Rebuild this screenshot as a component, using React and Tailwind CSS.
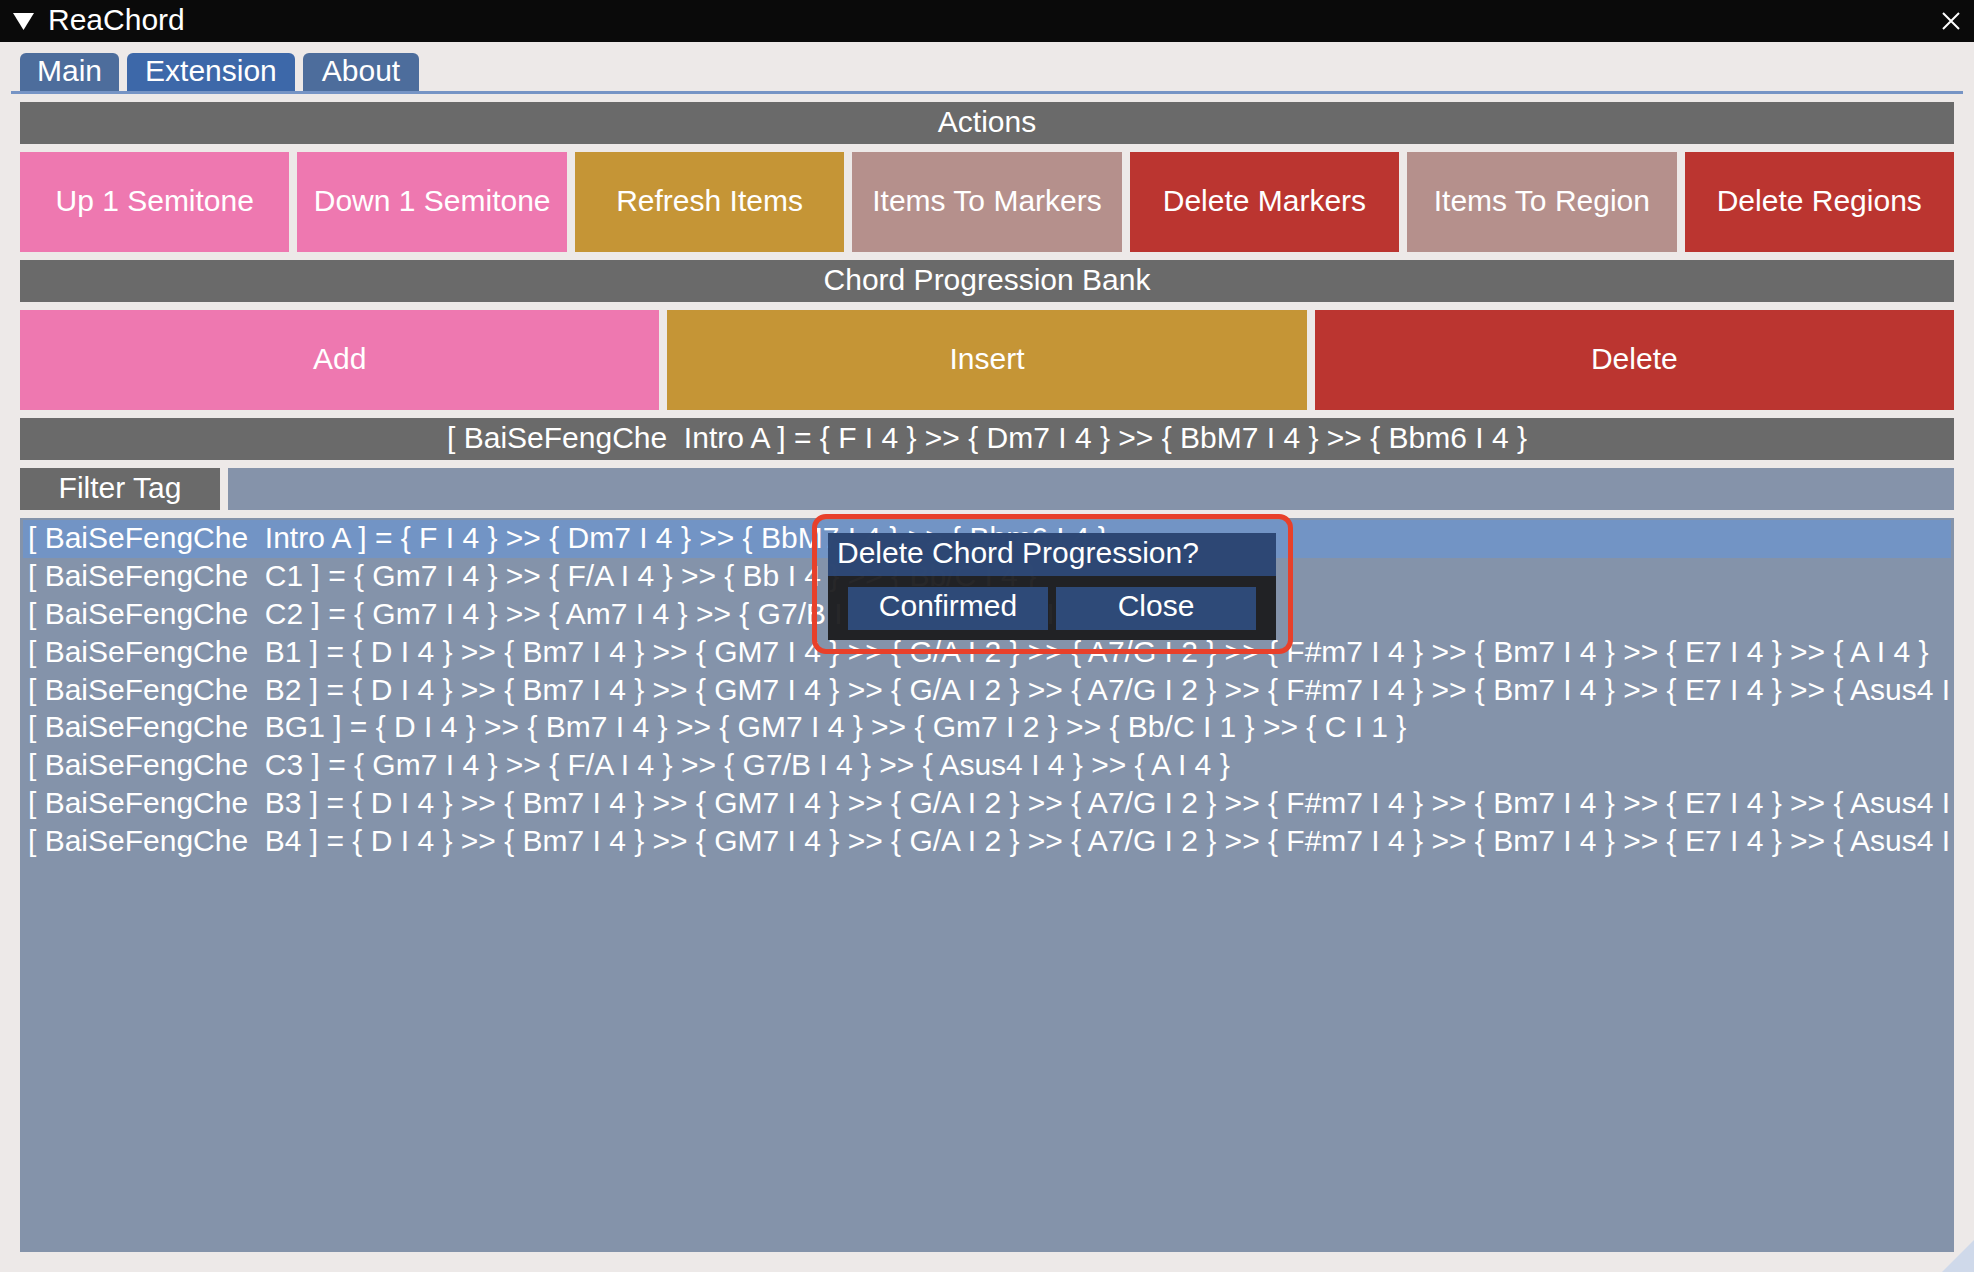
import React from 'react';

const FONT = { fontFamily: '"Liberation Sans", Arial, sans-serif' };

const actions = [
  { label: 'Up 1 Semitone', color: 'bg-[#ee78b0]' },
  { label: 'Down 1 Semitone', color: 'bg-[#ee78b0]' },
  { label: 'Refresh Items', color: 'bg-[#c59536]' },
  { label: 'Items To Markers', color: 'bg-[#b5908c]' },
  { label: 'Delete Markers', color: 'bg-[#bb3530]' },
  { label: 'Items To Region', color: 'bg-[#b5908c]' },
  { label: 'Delete Regions', color: 'bg-[#bb3530]' },
];

const bank = [
  { label: 'Add', color: 'bg-[#ee78b0]' },
  { label: 'Insert', color: 'bg-[#c59536]' },
  { label: 'Delete', color: 'bg-[#bb3530]' },
];

const B = '{ D I 4 } >> { Bm7 I 4 } >> { GM7 I 4 } >> { G/A I 2 } >> { A7/G I 2 } >> { F#m7 I 4 } >> { Bm7 I 4 } >> { E7 I 4 }';

const rows = [
  '[ BaiSeFengChe  Intro A ] = { F I 4 } >> { Dm7 I 4 } >> { BbM7 I 4 } >> { Bbm6 I 4 }',
  '[ BaiSeFengChe  C1 ] = { Gm7 I 4 } >> { F/A I 4 } >> { Bb I 4 } >> { Bb/C I 4 }',
  '[ BaiSeFengChe  C2 ] = { Gm7 I 4 } >> { Am7 I 4 } >> { G7/B I 4 } >> { Asus4 I 2 } >> { A I 2 }',
  `[ BaiSeFengChe  B1 ] = ${B} >> { A I 4 }`,
  `[ BaiSeFengChe  B2 ] = ${B} >> { Asus4 I 4 }`,
  '[ BaiSeFengChe  BG1 ] = { D I 4 } >> { Bm7 I 4 } >> { GM7 I 4 } >> { Gm7 I 2 } >> { Bb/C I 1 } >> { C I 1 }',
  '[ BaiSeFengChe  C3 ] = { Gm7 I 4 } >> { F/A I 4 } >> { G7/B I 4 } >> { Asus4 I 4 } >> { A I 4 }',
  `[ BaiSeFengChe  B3 ] = ${B} >> { Asus4 I 4 }`,
  `[ BaiSeFengChe  B4 ] = ${B} >> { Asus4 I 4 }`,
];

function Bar({ children }) {
  return (
    <div className="h-[42px] bg-[#6a6a6a] flex items-center justify-center whitespace-pre text-white pb-[2px]">
      {children}
    </div>
  );
}

export default function App() {
  return (
    <div
      className="relative w-[1974px] h-[1272px] overflow-hidden bg-[#ede9e8] flex flex-col text-[30px] leading-none text-white"
      style={FONT}
    >
      {/* title bar */}
      <div className="h-[42px] shrink-0 bg-[#0a0a0a] flex items-center pl-[13px] pr-[14px]">
        <svg width="21" height="17" viewBox="0 0 21 17" className="mr-[14px]">
          <polygon points="0,0 21,0 10.5,17" fill="white" />
        </svg>
        <span className="pb-[2px]">ReaChord</span>
        <svg width="18" height="18" viewBox="0 0 18 18" className="ml-auto">
          <path d="M1 1 L17 17 M17 1 L1 17" stroke="white" strokeWidth="2" />
        </svg>
      </div>

      {/* tabs */}
      <div className="mt-[11px] mx-[11px] flex gap-[8px] pl-[9px] border-b-[3px] border-[#7694c5]">
        <div className="h-[38px] px-[17px] pb-[2px] flex items-center rounded-t-[6px] bg-[#4d6d9c]">Main</div>
        <div className="h-[38px] px-[18px] pb-[2px] flex items-center rounded-t-[6px] bg-[#3d68a9]">Extension</div>
        <div className="h-[38px] px-[19px] pb-[2px] flex items-center rounded-t-[6px] bg-[#4d6d9c]">About</div>
      </div>

      {/* content */}
      <div className="flex-1 flex flex-col gap-[8px] px-[20px] pt-[8px] pb-[20px]">
        <Bar>Actions</Bar>
        <div className="h-[100px] grid grid-cols-7 gap-[8px]">
          {actions.map((a) => (
            <div key={a.label} className={`${a.color} flex items-center justify-center pb-[3px]`}>
              {a.label}
            </div>
          ))}
        </div>
        <Bar>Chord Progression Bank</Bar>
        <div className="h-[100px] grid grid-cols-3 gap-[8px]">
          {bank.map((a) => (
            <div key={a.label} className={`${a.color} flex items-center justify-center pb-[3px]`}>
              {a.label}
            </div>
          ))}
        </div>
        <Bar>{rows[0]}</Bar>
        <div className="h-[42px] flex gap-[8px]">
          <div className="w-[200px] bg-[#6a6a6a] flex items-center justify-center pb-[2px]">Filter Tag</div>
          <div className="flex-1 bg-[#8593aa]" />
        </div>
        <div className="flex-1 bg-[#8493aa] pt-[2px] px-[3px] overflow-hidden">
          {rows.map((r, i) => (
            <div
              key={i}
              className={`h-[37.8px] flex items-center pl-[5px] pb-[1px] whitespace-pre overflow-hidden ${
                i === 0 ? 'bg-[#7294c5]' : ''
              }`}
            >
              {r}
            </div>
          ))}
        </div>
      </div>

      {/* resize grip */}
      <svg width="32" height="32" viewBox="0 0 32 32" className="absolute right-0 bottom-0">
        <polygon points="32,0 32,32 0,32" fill="#cfd9ea" />
      </svg>

      {/* confirm popup */}
      <div className="absolute left-[828px] top-[533px] w-[448px] h-[107px] flex flex-col bg-[#1b1b1d]/95">
        <div className="h-[43px] bg-[#2e4a78]/95 flex items-center pl-[9px] pb-[4px]">Delete Chord Progression?</div>
        <div className="flex gap-[8px] px-[20px] pt-[11px]">
          <div className="w-[200px] h-[43px] bg-[#2e4a78] flex items-center justify-center pb-[5px]">Confirmed</div>
          <div className="w-[200px] h-[43px] bg-[#2e4a78] flex items-center justify-center pb-[5px]">Close</div>
        </div>
      </div>

      {/* annotation outline */}
      <div className="absolute left-[812px] top-[514px] w-[481px] h-[140px] border-[5px] border-[#e8402a] rounded-[14px]" />
    </div>
  );
}
